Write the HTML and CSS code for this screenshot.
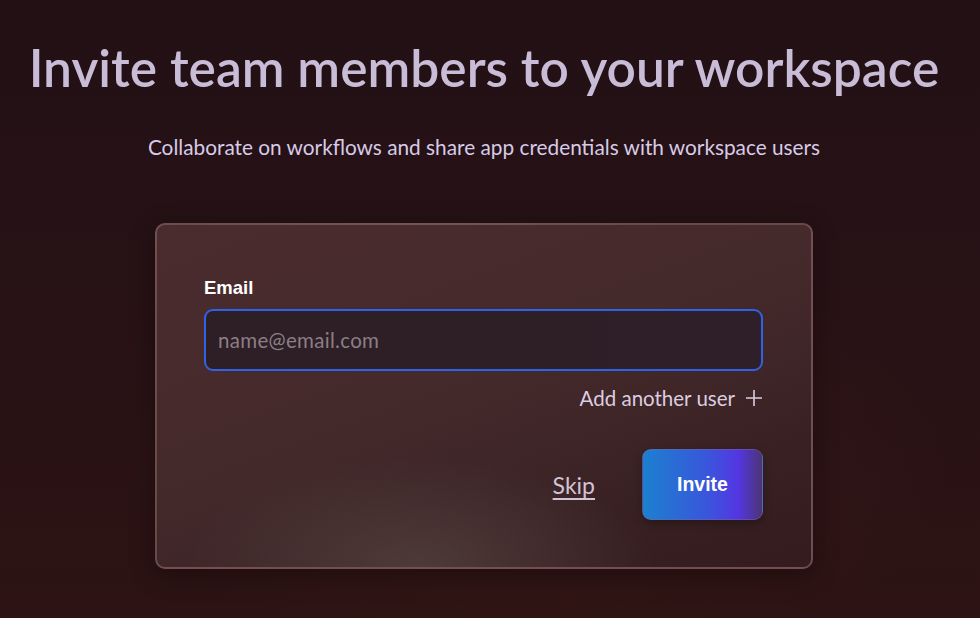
FILE: index.html
```html
<!DOCTYPE html>
<html lang="en">
<head>
<meta charset="utf-8">
<title>Invite team members</title>
<link rel="stylesheet" href="styles.css">
</head>
<body>
<main class="page">
  <h1 class="title">Invite team members to your workspace</h1>
  <p class="subtitle">Collaborate on workflows and share app credentials with workspace users</p>
  <section class="card">
    <label class="label" for="email">Email</label>
    <input class="input" id="email" type="email" placeholder="name@email.com">
    <div class="add-row">
      <span class="add-link">Add another user
        <svg class="plus" width="18" height="18" viewBox="0 0 18 18" aria-hidden="true"><path d="M9 1v16M1 9h16" stroke="#dccde0" stroke-width="1.6" fill="none"/></svg>
      </span>
    </div>
    <div class="actions">
      <a class="skip" href="#">Skip</a>
      <button class="invite" type="button">Invite</button>
    </div>
  </section>
</main>
</body>
</html>
```

FILE: styles.css
```css
html, body {
  margin: 0;
  height: 100%;
}
body {
  background:
    radial-gradient(ellipse 60% 50% at 55% 75%, rgba(70, 30, 30, 0.35), transparent 70%),
    linear-gradient(180deg, #221015 0%, #271216 45%, #2d1313 100%);
  font-family: "Lato", "Liberation Sans", sans-serif;
  color: #d8cbe0;
  overflow: hidden;
}
.page {
  display: flex;
  flex-direction: column;
  align-items: center;
  padding: 32px 12px 0 0;
}
.title {
  margin: 0;
  font-size: 51.5px;
  font-weight: 600;
  letter-spacing: 0px;
  color: #c8bcd6;
  line-height: 70px;
}
.subtitle {
  margin: 32px 0 0;
  font-size: 20.8px;
  line-height: 26px;
  color: #d8cbe6;
}
.card {
  margin-top: 63px;
  width: 658px;
  height: 346px;
  box-sizing: border-box;
  border: 2px solid rgba(150, 110, 110, 0.55);
  border-radius: 10px;
  padding: 52px 48px 0 47px;
  display: flex;
  flex-direction: column;
  background:
    radial-gradient(ellipse 45% 40% at 40% 100%, rgba(90, 75, 70, 0.6), transparent 80%),
    linear-gradient(160deg, #4b2c2e 0%, #452a2b 45%, #3a2224 75%, #341b1e 100%);
  box-shadow: 0 6px 24px rgba(10, 0, 0, 0.4);
}
.label {
  font-family: "Liberation Sans", sans-serif;
  font-weight: 700;
  font-size: 18.5px;
  color: #ffffff;
  line-height: 22px;
}
.input {
  margin-top: 10px;
  height: 62px;
  box-sizing: border-box;
  border: 2px solid #2f62e6;
  border-radius: 9px;
  background: linear-gradient(90deg, #2e1e25, #2e1f28);
  padding: 0 12px;
  font-family: "Lato", sans-serif;
  font-size: 20.5px;
  letter-spacing: 0.3px;
  color: #e0d4e4;
  outline: none;
}
.input::placeholder {
  color: #8b7e86;
}
.add-row {
  display: flex;
  justify-content: flex-end;
  margin-top: 14px;
}
.add-link {
  display: flex;
  align-items: center;
  gap: 10px;
  font-size: 20.5px;
  color: #dccde0;
  line-height: 26px;
}
.actions {
  display: flex;
  justify-content: flex-end;
  align-items: center;
  gap: 47px;
  margin-top: 38px;
}
.skip {
  font-size: 23px;
  color: #d2c3d6;
  text-decoration: underline;
  text-decoration-thickness: 1.5px;
  text-underline-offset: 4px;
}
.invite {
  width: 121px;
  height: 71px;
  border: 1px solid rgba(120, 100, 160, 0.5);
  border-radius: 9px;
  background: linear-gradient(90deg, #1c80cf 0%, #3a55dc 55%, #5436e2 80%, #4b3574 100%);
  color: #ffffff;
  font-family: "Liberation Sans", sans-serif;
  font-weight: 700;
  font-size: 19.5px;
  box-shadow: 0 3px 8px rgba(0, 0, 0, 0.3);
}
```
